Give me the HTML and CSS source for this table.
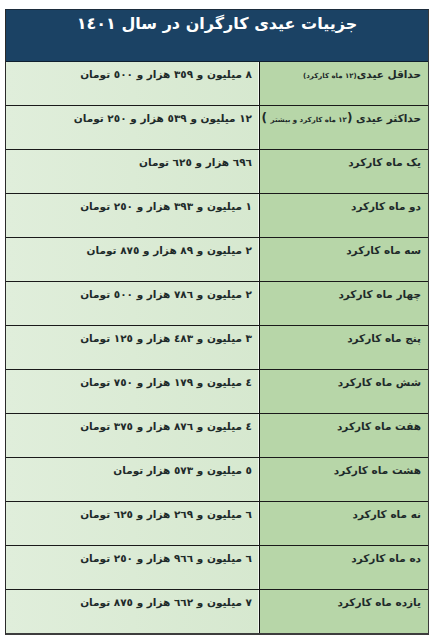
FILE: index.html
```html
<!DOCTYPE html>
<html lang="fa" dir="rtl">
<head>
<meta charset="utf-8">
<title>جزییات عیدی کارگران در سال ۱۴۰۱</title>
<link rel="stylesheet" href="styles.css">
</head>
<body>
<div class="page">
  <div class="table">
    <div class="header">جزییات عیدی کارگران در سال ١٤٠١</div>
    <div class="rows">
      <div class="row"><div class="label">حداقل عیدی<span class="small">(١٢ ماه کارکرد)</span></div><div class="value">٨ میلیون و ٣٥٩ هزار و ٥٠٠ تومان</div></div>
      <div class="row"><div class="label">حداکثر عیدی <span class="paren">(</span><span class="small">١٢ ماه کارکرد و بیشتر</span> <span class="paren">)</span></div><div class="value">١٢ میلیون و ٥٣٩ هزار و ٢٥٠ تومان</div></div>
      <div class="row"><div class="label">یک ماه کارکرد</div><div class="value">٦٩٦ هزار و ٦٢٥ تومان</div></div>
      <div class="row"><div class="label">دو ماه کارکرد</div><div class="value">١ میلیون و ٣٩٣ هزار و ٢٥٠ تومان</div></div>
      <div class="row"><div class="label">سه ماه کارکرد</div><div class="value">٢ میلیون و ٨٩ هزار و ٨٧٥ تومان</div></div>
      <div class="row"><div class="label">چهار ماه کارکرد</div><div class="value">٢ میلیون و ٧٨٦ هزار و ٥٠٠ تومان</div></div>
      <div class="row"><div class="label">پنج ماه کارکرد</div><div class="value">٣ میلیون و ٤٨٣ هزار و ١٢٥ تومان</div></div>
      <div class="row"><div class="label">شش ماه کارکرد</div><div class="value">٤ میلیون و ١٧٩ هزار و ٧٥٠ تومان</div></div>
      <div class="row"><div class="label">هفت ماه کارکرد</div><div class="value">٤ میلیون و ٨٧٦ هزار و ٣٧٥ تومان</div></div>
      <div class="row"><div class="label">هشت ماه کارکرد</div><div class="value">٥ میلیون و ٥٧٣ هزار تومان</div></div>
      <div class="row"><div class="label">نه ماه کارکرد</div><div class="value">٦ میلیون و ٢٦٩ هزار و ٦٢٥ تومان</div></div>
      <div class="row"><div class="label">ده ماه کارکرد</div><div class="value">٦ میلیون و ٩٦٦ هزار و ٢٥٠ تومان</div></div>
      <div class="row"><div class="label">یازده ماه کارکرد</div><div class="value">٧ میلیون و ٦٦٢ هزار و ٨٧٥ تومان</div></div>
    </div>
  </div>
</div>
</body>
</html>
```
FILE: styles.css
```css
* { box-sizing: border-box; }
html, body { margin: 0; padding: 0; background: #ffffff; }
body {
  font-family: "DejaVu Sans", "Noto Sans", sans-serif;
  font-weight: bold;
  color: #1a1a1a;
}
.page {
  padding: 9px 7px 0 5px;
}
.table {
  width: 424px;
  border-left: 1px solid #2a2a2a;
  border-right: 1px solid #3a3a3a;
  border-bottom: 2px solid #3d3d3d;
  border-top: 1px solid #1c2c3c;
}
.header {
  height: 52px;
  background: #1b4264;
  color: #ffffff;
  font-size: 16px;
  text-align: center;
  padding-top: 3px;
  line-height: 22px;
  border-bottom: 1px solid #0f1f2f;
}
.rows {
  display: flex;
  flex-direction: column;
}
.row {
  display: grid;
  grid-template-columns: 168px 1fr;
  height: 44px;
  border-bottom: 1px solid #1a1a1a;
}
.row:last-child { border-bottom: none; height: 43px; }
.label {
  background: #b7d6a8;
  font-size: 10.5px;
  padding: 5px 7px 0 0;
  line-height: 14px;
  white-space: nowrap;
  color: #1e2a2a;
}
.value {
  background: linear-gradient(to left, #d6e8cf, #e0eedb);
  border-right: 1px solid #111111;
  box-shadow: inset -1px 0 0 #f2f8ef;
  font-size: 10.5px;
  padding: 5px 7px 0 0;
  line-height: 14px;
  white-space: nowrap;
  color: #1e2a2a;
}
.small {
  font-size: 7px;
}
.paren {
  font-size: 12px;
}
```
